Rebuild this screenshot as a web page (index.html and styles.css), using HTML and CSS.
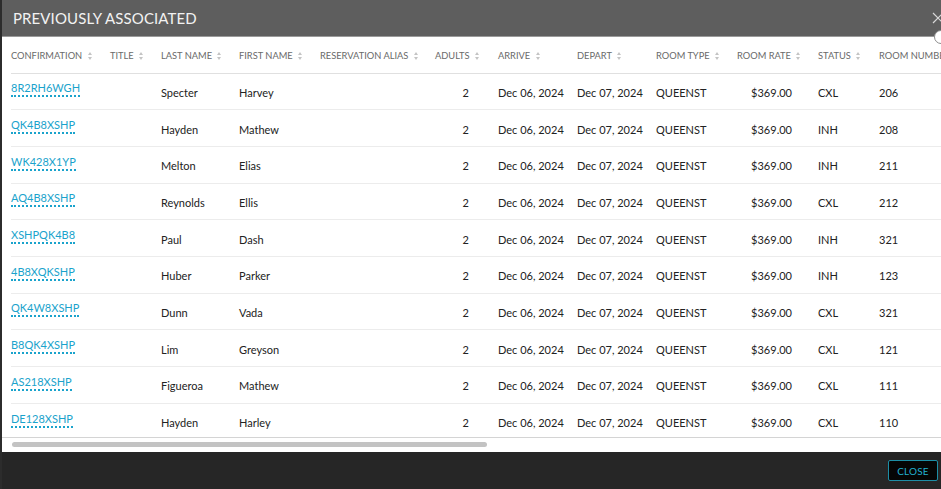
FILE: index.html
```html
<!DOCTYPE html>
<html lang="en">
	<head>
		<meta charset="UTF-8" />
		<title>Previously Associated</title>
		<link rel="stylesheet" href="styles.css">
	</head>
	<body>
		<div class="modal">
			<header class="modal-head">
				<h2>Previously Associated</h2>
				<button class="close-x" aria-label="Close">
					<svg width="12" height="12" viewBox="0 0 12 12"><path d="M1 1 L11 11 M11 1 L1 11" stroke="#d8d8d8" stroke-width="1.2" fill="none"/></svg>
				</button>
				<span class="ring"></span>
			</header>

			<div class="modal-body">
				<div class="table-wrap">
					<table class="grid">
						<colgroup>
							<col style="width:99px"><col style="width:51px"><col style="width:78px"><col style="width:81px">
							<col style="width:115px"><col style="width:63px"><col style="width:79px"><col style="width:79px">
							<col style="width:81px"><col style="width:81px"><col style="width:61px"><col style="width:90px">
						</colgroup>
						<thead>
							<tr>
								<th>Confirmation <i class="sort"></i></th>
								<th>Title <i class="sort"></i></th>
								<th>Last Name <i class="sort"></i></th>
								<th>First Name <i class="sort"></i></th>
								<th>Reservation Alias <i class="sort"></i></th>
								<th>Adults <i class="sort"></i></th>
								<th>Arrive <i class="sort"></i></th>
								<th>Depart <i class="sort"></i></th>
								<th>Room Type <i class="sort"></i></th>
								<th>Room Rate <i class="sort"></i></th>
								<th>Status <i class="sort"></i></th>
								<th>Room Number <i class="sort"></i></th>
							</tr>
						</thead>
						<tbody id="rows"></tbody>
					</table>
				</div>
				<div class="hscroll"><div class="thumb"></div></div>
			</div>

			<footer class="modal-foot">
				<button class="btn-close">CLOSE</button>
			</footer>
		</div>
		<script>
			const rows = [
				["8R2RH6WGH", "Specter", "Harvey", "CXL", "206"],
				["QK4B8XSHP", "Hayden", "Mathew", "INH", "208"],
				["WK428X1YP", "Melton", "Elias", "INH", "211"],
				["AQ4B8XSHP", "Reynolds", "Ellis", "CXL", "212"],
				["XSHPQK4B8", "Paul", "Dash", "INH", "321"],
				["4B8XQKSHP", "Huber", "Parker", "INH", "123"],
				["QK4W8XSHP", "Dunn", "Vada", "CXL", "321"],
				["B8QK4XSHP", "Lim", "Greyson", "CXL", "121"],
				["AS218XSHP", "Figueroa", "Mathew", "CXL", "111"],
				["DE128XSHP", "Hayden", "Harley", "CXL", "110"]
			];

			// Build the table body
			const tbody = document.getElementById("rows");
			rows.forEach(([conf, last, first, status, room]) => {
				const tr = document.createElement("tr");
				tr.innerHTML = `
					<td><a class="conf" href="#">${conf}</a></td>
					<td></td>
					<td>${last}</td>
					<td>${first}</td>
					<td></td>
					<td class="num adults">2</td>
					<td>Dec 06, 2024</td>
					<td>Dec 07, 2024</td>
					<td>QUEENST</td>
					<td class="num rate">$369.00</td>
					<td>${status}</td>
					<td>${room}</td>`;
				tbody.appendChild(tr);
			});
		</script>
	</body>
</html>
```

FILE: styles.css
```css
* {
	margin: 0;
	padding: 0;
	box-sizing: border-box;
}

body {
	font-family: Lato, "Open Sans", sans-serif;
	background: #2c2c2c;
	overflow: hidden;
	height: 489px;
}

.modal {
	margin-left: 2px;
	width: 950px;
	height: 489px;
	display: flex;
	flex-direction: column;
	background: #fff;
}

.modal-head {
	position: relative;
	height: 37px;
	flex: none;
	display: flex;
	align-items: center;
	padding: 0 8px 0 11px;
	background: #5e5e5e;
	border-bottom: 1px solid #9a9a9a;
}

.modal-head h2 {
	font-size: 15px;
	font-weight: 400;
	text-transform: uppercase;
	color: #f2f2f2;
	letter-spacing: 0.1px;
}

.close-x {
	margin-left: auto;
	background: none;
	border: none;
	display: flex;
	margin-top: -1px;
}

.ring {
	position: absolute;
	right: 4px;
	bottom: -8px;
	width: 14px;
	height: 14px;
	border: 1.5px solid #8c8c8c;
	border-radius: 50%;
	background: #fff;
}

.modal-body {
	flex: 1;
	display: flex;
	flex-direction: column;
	background: #fff;
}

.table-wrap {
	height: 401px;
	overflow: hidden;
	border-bottom: 1px solid #d4d4d4;
	padding-left: 9px;
}

.grid {
	table-layout: fixed;
	border-collapse: collapse;
	width: 958px;
	white-space: nowrap;
}

.grid th {
	height: 36px;
	padding-top: 2px;
	text-align: left;
	font-size: 9.3px;
	font-weight: 400;
	text-transform: uppercase;
	color: #6a6a6a;
	border-bottom: 1px solid #e0e0e0;
	vertical-align: middle;
}

.sort {
	display: inline-block;
	width: 5px;
	height: 8px;
	margin-left: 3px;
	vertical-align: -1px;
	position: relative;
}

.sort::before,
.sort::after {
	content: "";
	position: absolute;
	left: 0;
	border-left: 2.5px solid transparent;
	border-right: 2.5px solid transparent;
}

.sort::before {
	top: 0;
	border-bottom: 3px solid #c4c4c4;
}

.sort::after {
	bottom: 0;
	border-top: 3px solid #c4c4c4;
}

.grid td {
	height: 36.7px;
	padding-top: 2px;
	font-size: 11px;
	color: #222;
	border-bottom: 1px solid #ececec;
	vertical-align: middle;
}

.grid td.num {
	text-align: right;
}

.grid td.adults {
	padding-right: 29px;
}

.grid td.rate {
	padding-right: 26px;
}

.conf {
	display: inline-block;
	font-size: 11px;
	color: #1aa3cc;
	text-decoration: none;
	border-bottom: 2px dotted #1aa3cc;
	padding-bottom: 1px;
	margin-bottom: 6px;
}

.hscroll {
	height: 13px;
	padding: 4px 0 0 10px;
}

.thumb {
	width: 475px;
	height: 5px;
	border-radius: 3px;
	background: #c3c3c3;
}

.modal-foot {
	height: 37px;
	flex: none;
	display: flex;
	align-items: center;
	justify-content: flex-end;
	padding-right: 14px;
	background: #262626;
}

.btn-close {
	width: 50px;
	height: 21px;
	font-family: Lato, sans-serif;
	font-size: 10px;
	color: #22b0d0;
	background: #050505;
	border: 1px solid #1d8ea6;
	border-radius: 2px;
	letter-spacing: 0.2px;
}
```
